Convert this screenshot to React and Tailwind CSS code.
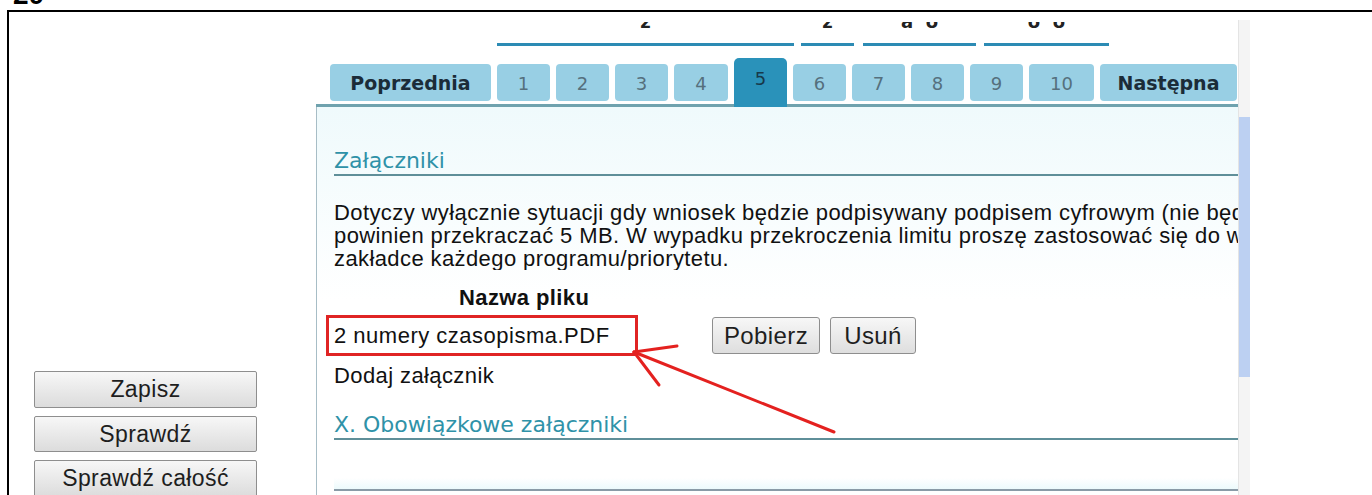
import React from "react";

const arial = { fontFamily: '"Liberation Sans", Arial, sans-serif' };
const verdana = { fontFamily: '"DejaVu Sans", Verdana, sans-serif' };

const tabs = [
  { label: "Poprzednia", w: "w-[161px]", bold: true },
  { label: "1", w: "w-[53px]" },
  { label: "2", w: "w-[53px]" },
  { label: "3", w: "w-[53px]" },
  { label: "4", w: "w-[54px]" },
  { label: "5", w: "w-[53px]", active: true },
  { label: "6", w: "w-[53px]" },
  { label: "7", w: "w-[53px]" },
  { label: "8", w: "w-[53px]" },
  { label: "9", w: "w-[53px]" },
  { label: "10", w: "w-[65px]" },
  { label: "Następna", w: "w-[137px]", bold: true },
];

function Tab({ label, w, bold, active }) {
  if (active) {
    return (
      <div
        className={`${w} h-[49px] -mb-[3px] relative z-10 rounded-t-[5px] bg-[#2a92ba] flex items-center justify-center text-[18px] text-[#17394a]`}
        style={verdana}
      >
        <span className="-mt-[8px]">{label}</span>
      </div>
    );
  }
  return (
    <div
      className={`${w} h-[37px] mb-[3px] pt-[2px] rounded-[4px] bg-[#98cfe4] flex items-center justify-center ${
        bold ? "font-bold text-[19px] text-[#1b2c38]" : "text-[18px] text-[#55707d]"
      }`}
      style={verdana}
    >
      {label}
    </div>
  );
}

// header row of the form above the tabs, mostly scrolled out of view
function HeaderCell({ w, text }) {
  return (
    <div className={`${w} flex flex-col items-center`}>
      <div className="mt-[10px] h-[6px] w-full overflow-hidden flex justify-center">
        <span
          className="block -mt-[10px] text-[18px] leading-[20px] font-bold text-[#222] whitespace-pre"
          style={verdana}
        >
          {text}
        </span>
      </div>
      <div className="mt-[15px] h-[3px] w-full bg-[#2c8bb4]" />
    </div>
  );
}

function SideButton({ children }) {
  return (
    <button
      className="w-[223px] h-[37px] border border-[#8e8e8e] rounded-[2px] bg-gradient-to-b from-[#f7f7f7] to-[#dcdcdc] text-[23px] tracking-[0.4px] text-[#1e1e1e] flex items-center justify-center"
      style={arial}
    >
      {children}
    </button>
  );
}

function SmallButton({ w, children }) {
  return (
    <button
      className={`${w} h-[37px] border border-[#8e8e8e] rounded-[3px] bg-gradient-to-b from-[#f7f7f7] to-[#dedede] text-[24px] tracking-[0.4px] text-[#1e1e1e] flex items-center justify-center`}
      style={arial}
    >
      {children}
    </button>
  );
}

export default function App() {
  return (
    <div className="w-[1372px] h-[495px] overflow-hidden bg-white relative" style={arial}>
      {/* page number, cut at the top edge */}
      <div className="h-[10px] overflow-hidden pl-[13px]">
        <div className="-mt-[19px] text-[28px] leading-[28px] font-bold text-black" style={arial}>
          20
        </div>
      </div>

      {/* framed screenshot of the application */}
      <div className="ml-[7px] border-l-2 border-t-2 border-black h-[485px] flex">
        {/* left action buttons */}
        <div className="w-[307px] shrink-0 pt-[359px] pl-[25px] flex flex-col gap-[8px]">
          <SideButton>Zapisz</SideButton>
          <SideButton>Sprawdź</SideButton>
          <SideButton>Sprawdź całość</SideButton>
        </div>

        {/* form area */}
        <div className="w-[922px] shrink-0 flex flex-col">
          {/* header row */}
          <div className="h-[46px] shrink-0 pl-[181px] flex items-start gap-[7px]">
            <HeaderCell w="w-[297px]" text="z" />
            <HeaderCell w="w-[53px]" text="z" />
            <div className="ml-[2px]">
              <HeaderCell w="w-[113px]" text="a  o" />
            </div>
            <div className="ml-[1px]">
              <HeaderCell w="w-[125px]" text="o  o" />
            </div>
          </div>

          {/* step tabs */}
          <div className="shrink-0 flex items-end gap-[6px] pl-[14px] border-b-[3px] border-[#6fa2ae]">
            {tabs.map((t) => (
              <Tab key={t.label} {...t} />
            ))}
          </div>

          {/* step panel */}
          <div className="flex-1 min-h-0 overflow-hidden border-l border-[#a7bdc6] bg-gradient-to-b from-[#effafc] via-white to-white">
            <div className="pl-[17px] pt-[41px]">
              <div
                className="border-b-2 border-[#5f8f99] text-[22px] leading-[26px] text-[#2f92a8]"
                style={verdana}
              >
                Załączniki
              </div>

              <div
                className="mt-[25px] overflow-hidden text-[22px] leading-[23px] tracking-[0.4px] text-[#111] whitespace-nowrap"
                style={arial}
              >
                <div>
                  Dotyczy wyłącznie sytuacji gdy wniosek będzie podpisywany podpisem cyfrowym (nie będzie drukowany). Rozmiar załącznika nie
                </div>
                <div>
                  powinien przekraczać 5 MB. W wypadku przekroczenia limitu proszę zastosować się do wskazówek zamieszczonych w
                </div>
                <div>zakładce każdego programu/priorytetu.</div>
              </div>

              <div
                className="mt-[16px] pl-[125px] text-[22px] leading-[23px] tracking-[0.4px] font-bold text-[#111]"
                style={arial}
              >
                Nazwa pliku
              </div>

              <div className="mt-[6px] -ml-[8px] flex items-center">
                <div
                  className="w-[312px] h-[41px] border-[3px] border-[#e02424] flex items-center pl-[5px] text-[22px] tracking-[0.5px] text-[#111]"
                  style={arial}
                >
                  2 numery czasopisma.PDF
                </div>
                <div className="ml-[74px] flex gap-[10px]">
                  <SmallButton w="w-[108px]">Pobierz</SmallButton>
                  <SmallButton w="w-[86px]">Usuń</SmallButton>
                </div>
              </div>

              <div className="mt-[8px] text-[22px] leading-[23px] tracking-[0.4px] text-[#111]" style={arial}>
                Dodaj załącznik
              </div>

              <div
                className="mt-[25px] border-b-2 border-[#5f8f99] text-[22px] leading-[26px] text-[#2f92a8]"
                style={verdana}
              >
                X. Obowiązkowe załączniki
              </div>

              <div className="mt-[38px] h-[11px] bg-gradient-to-b from-white to-[#ecfafc]" />
              <div className="h-[10px] border-t-2 border-[#8a9ba7]" />
            </div>
          </div>
        </div>

        {/* vertical scrollbar of the form */}
        <div className="w-[12px] shrink-0 pt-[8px] flex flex-col">
          <div className="flex-1 bg-[#f4f4f4] border-l border-[#e4e4e4] flex flex-col">
            <div className="h-[97px] shrink-0" />
            <div className="h-[260px] shrink-0 bg-[#bcd0f2]" />
          </div>
        </div>
      </div>

      {/* red annotation arrow pointing at the uploaded file */}
      <svg className="absolute left-0 top-0 pointer-events-none" width="1372" height="495">
        <g stroke="#e4211f" strokeWidth="3" strokeLinecap="round" fill="none">
          <line x1="834" y1="432" x2="634" y2="352" />
          <line x1="634" y1="352" x2="677" y2="346" />
          <line x1="634" y1="352" x2="659" y2="385" />
        </g>
      </svg>
    </div>
  );
}
